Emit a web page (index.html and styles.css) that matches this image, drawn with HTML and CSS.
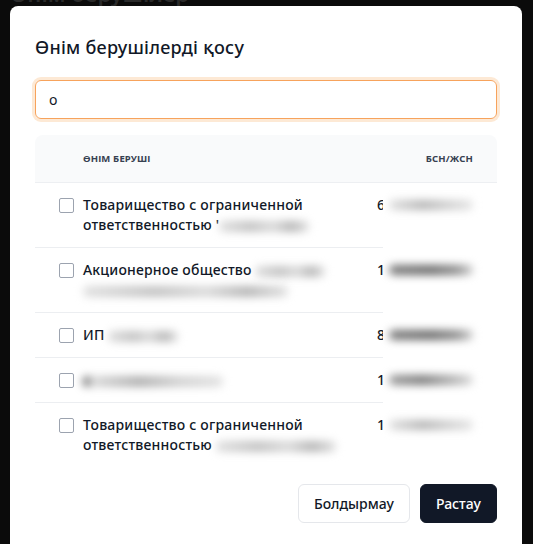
FILE: index.html
```html
<!DOCTYPE html>
<html lang="kk">
<head>
<meta charset="utf-8">
<title>Өнім берушілерді қосу</title>
<link rel="stylesheet" href="styles.css">
</head>
<body>
<div class="backdrop">
  <div class="page-title">Өнім берушілер</div>
</div>
<div class="modal">
  <h2 class="modal-title">Өнім берушілерді қосу</h2>
  <div class="search">o</div>
  <div class="table">
    <div class="thead">
      <div class="th th-name">Өнім беруші</div>
      <div class="th th-bin">БСН/ЖСН</div>
    </div>
    <div class="row">
      <div class="name"><span class="cb"></span><span class="text">Товарищество с ограниченной ответственностью '<span class="blur w90"></span></span></div>
      <div class="bin">6<span class="digits">00000000000</span><span class="mask"><span class="bar light"></span></span></div>
    </div>
    <div class="row">
      <div class="name"><span class="cb"></span><span class="text">Акционерное общество <span class="blur w70"></span> <span class="blur w200"></span></span></div>
      <div class="bin">1<span class="digits">00000000000</span><span class="mask"><span class="bar dark"></span></span></div>
    </div>
    <div class="row">
      <div class="name"><span class="cb"></span><span class="text">ИП <span class="blur w70"></span></span></div>
      <div class="bin">8<span class="digits">00000000000</span><span class="mask"><span class="bar dark"></span></span></div>
    </div>
    <div class="row">
      <div class="name"><span class="cb"></span><span class="text"><span class="blur w140 lead"></span></span></div>
      <div class="bin">1<span class="digits">00000000000</span><span class="mask"><span class="bar mid"></span></span></div>
    </div>
    <div class="row last">
      <div class="name"><span class="cb"></span><span class="text">Товарищество с ограниченной ответственностью <span class="blur w120"></span></span></div>
      <div class="bin">1<span class="digits">00000000000</span><span class="mask"><span class="bar light"></span></span></div>
    </div>
  </div>
  <div class="footer">
    <button class="btn btn-outline">Болдырмау</button>
    <button class="btn btn-primary">Растау</button>
  </div>
</div>
</body>
</html>
```
FILE: styles.css
```css
* { box-sizing: border-box; }
html, body {
  margin: 0;
  height: 100%;
}
body {
  background: #0b0b0b;
  font-family: "Noto Sans", "Open Sans", sans-serif;
  color: #111827;
  overflow: hidden;
  position: relative;
}
.backdrop {
  padding-left: 10px;
}
.page-title {
  margin-top: -19px;
  font-size: 22px;
  font-weight: 600;
  color: #2a2a2a;
  line-height: 24px;
}
.modal {
  position: absolute;
  left: 10px;
  top: 6px;
  width: 512px;
  height: 560px;
  background: #ffffff;
  border-radius: 8px;
  padding: 27px 25px 0 25px;
}
.modal-title {
  margin: 0;
  font-size: 18px;
  font-weight: 500;
  line-height: 28px;
  letter-spacing: 0.25px;
  color: #111827;
}
.search {
  margin-top: 19px;
  height: 39px;
  border: 1px solid #f7a35c;
  border-radius: 6px;
  box-shadow: 0 0 0 3px #fde9d5;
  padding: 0 13px;
  font-size: 14px;
  line-height: 37px;
  color: #111827;
}
.table {
  margin-top: 16px;
}
.thead {
  display: grid;
  grid-template-columns: 328px 1fr;
  height: 48px;
  background: #f9fafb;
  border-radius: 8px 8px 0 0;
  border-bottom: 1px solid #edeff2;
  align-items: center;
}
.th {
  font-size: 9.5px;
  font-weight: 700;
  text-transform: uppercase;
  letter-spacing: 0.15px;
  color: #374151;
}
.th-name { padding-left: 48px; }
.th-bin { text-align: right; padding-right: 24px; }
.row {
  display: grid;
  grid-template-columns: 328px 1fr;
  border-bottom: 1px solid #eceef1;
  font-size: 14px;
  line-height: 20px;
  letter-spacing: 0.2px;
}
.row.last { border-bottom: none; }
.name {
  display: flex;
  align-items: flex-start;
  gap: 9px;
  padding: 12px 0 12px 24px;
}
.cb {
  flex: none;
  width: 15px;
  height: 15px;
  margin-top: 3px;
  border: 1.5px solid #9ca3af;
  border-radius: 2px;
  background: #fff;
}
.text {
  font-weight: 500;
}
.blur {
  display: inline-block;
  height: 11px;
  vertical-align: middle;
  border-radius: 5px;
  background: linear-gradient(90deg, #e0e0e0, #c2c2c2 35%, #dadada 60%, #b5b5b5 80%, #e2e2e2);
  filter: blur(4px);
}
.w70 { width: 70px; }
.w90 { width: 90px; }
.w120 { width: 120px; }
.w140 { width: 140px; }
.w200 { width: 205px; }
.lead { background: linear-gradient(90deg, #555 0, #555 3px, #dadada 8px, #b0b0b0 40%, #d2d2d2 70%, #e2e2e2); }
.bin {
  position: relative;
  text-align: right;
  padding: 12px 24px 12px 0;
  font-weight: 500;
  letter-spacing: 0;
}
.digits { color: #999; }
.mask {
  position: absolute;
  left: 20px;
  width: 122px;
  top: 0;
  bottom: -1px;
  background: #ffffff;
}
.bar {
  position: absolute;
  left: 6px;
  top: 17px;
  width: 84px;
  height: 10px;
  border-radius: 5px;
  filter: blur(4px);
}
.bar.light { background: linear-gradient(90deg, #e0e0e0, #b5b5b5 40%, #cfcfcf 70%, #e5e5e5); }
.bar.mid { background: linear-gradient(90deg, #9a9a9a, #7a7a7a 40%, #b5b5b5 80%, #dcdcdc); }
.bar.dark { background: linear-gradient(90deg, #7a7a7a, #6a6a6a 50%, #8a8a8a 80%, #cfcfcf); }
.footer {
  display: flex;
  justify-content: flex-end;
  gap: 10px;
  margin-top: 17px;
}
.btn {
  height: 39px;
  border-radius: 6px;
  font-family: "Noto Sans", "Open Sans", sans-serif;
  font-size: 14px;
  font-weight: 500;
  padding: 0 15px;
  cursor: pointer;
}
.btn-outline {
  background: #fff;
  border: 1px solid #e5e7eb;
  color: #111827;
}
.btn-primary {
  background: #111827;
  border: 1px solid #111827;
  color: #ffffff;
}
```
